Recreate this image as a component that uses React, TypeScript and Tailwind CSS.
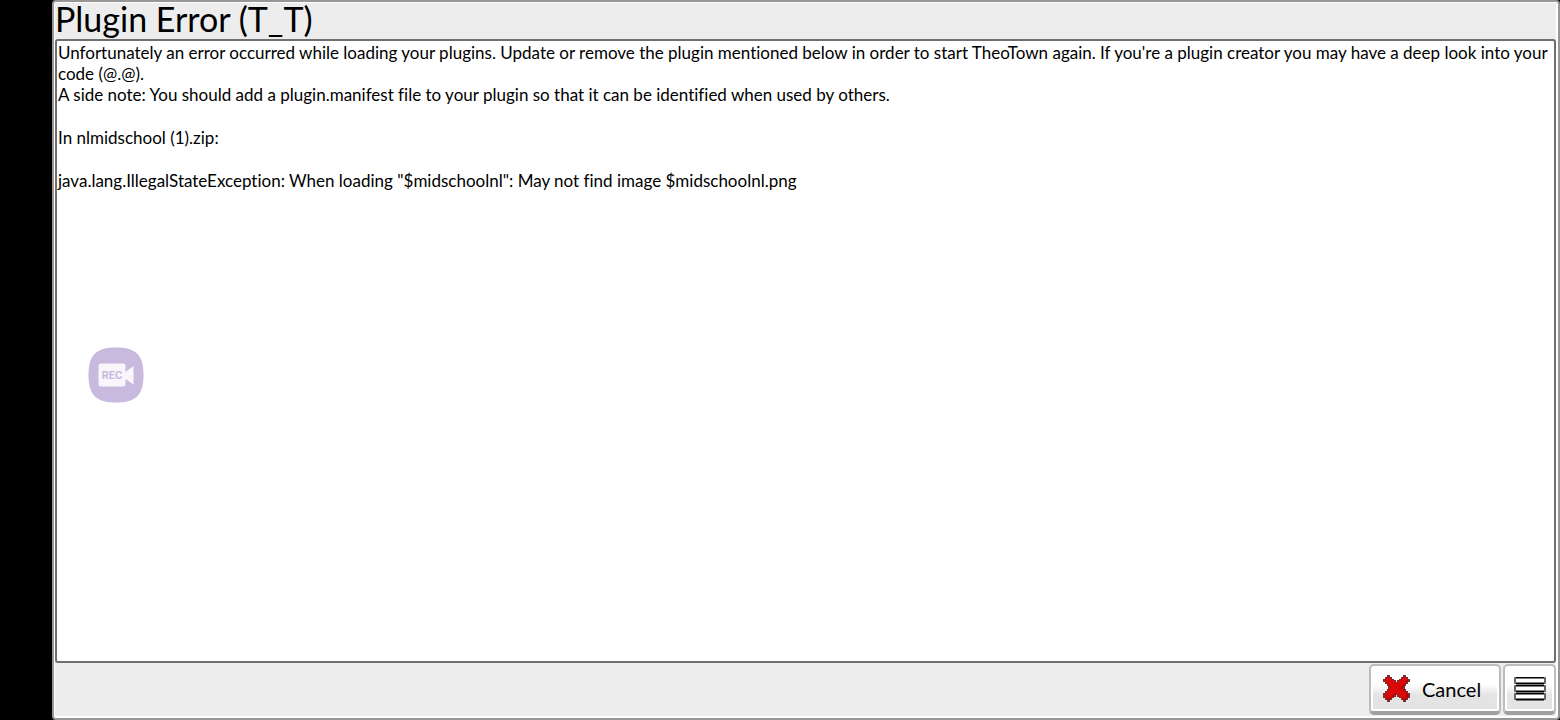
import type { ReactNode } from "react";

// Pixel map for the cross sprite: # outline, r fill, d shade
const CROSS = [
	"..##.......##..",
	".#rr#.....#rr#.",
	"#rrrr#...#rrrr#",
	"#rrrrr#.#rrrrd#",
	".#rrrrr#rrrrd#.",
	"..#rrrrrrrrd#..",
	"...#rrrrrrd#...",
	"...#rrrrrrd#...",
	"..#rrrrrrrrd#..",
	".#rrrrrrrrrrd#.",
	"#rrrrrd#rrrrrd#",
	"#rrrrd#.#rrrrd#",
	"#rrdd#...#rrdd#",
	".#dd#.....#dd#.",
	"..##.......##..",
];

const CROSS_COLORS: Record<string, string> = {
	"#": "#7a3030",
	r: "#dc0808",
	d: "#b80404",
};

export default function App() {
	return (
		<div className="flex h-screen bg-black pl-[52px] font-['Lato',sans-serif] text-black [font-variant-ligatures:none]">
			<main className="relative flex min-w-0 flex-1 flex-col rounded-[4px] border-2 border-[#979797] bg-white pt-px pr-0.5 pb-0.5 pl-px">
				<div className="flex min-h-0 flex-1 flex-col bg-[#ededed]">
					<h1 className="h-9 shrink-0 text-[34px] leading-8">
						Plugin Error (T_T)
					</h1>

					<ErrorLog />

					<footer className="flex h-[53px] shrink-0 items-start justify-end gap-0.5 pt-px">
						<GameButton className="w-[132px] gap-3 pl-2">
							<CrossIcon />
							<span className="text-xl leading-6">Cancel</span>
						</GameButton>
						<GameButton className="w-[53px] justify-center" label="Menu">
							<LinesIcon />
						</GameButton>
					</footer>
				</div>

				<RecordBubble />
			</main>
		</div>
	);
}

function ErrorLog() {
	return (
		<section className="min-h-0 flex-1 overflow-hidden rounded-[3px] border-2 border-[#6f6f6f] bg-white px-px pt-px text-[17px] leading-[21px]">
			<p className="mb-[22px]">
				Unfortunately an error occurred while loading your plugins. Update or
				remove the plugin mentioned below in order to start TheoTown again. If
				you're a plugin creator you may have a deep look into your code (@.@).
				<br />A side note: You should add a plugin.manifest file to your plugin
				so that it can be identified when used by others.
			</p>
			<p className="mb-[22px]">In nlmidschool (1).zip:</p>
			<p>
				java.lang.IllegalStateException: When loading "$midschoolnl": May not
				find image $midschoolnl.png
			</p>
		</section>
	);
}

function GameButton({
	className,
	label,
	children,
}: {
	className: string;
	label?: string;
	children: ReactNode;
}) {
	return (
		<button
			type="button"
			aria-label={label}
			className={`flex h-[51px] items-center rounded-[5px] border-2 border-b-4 border-[#bcbcbc] border-b-[#a0a0a0] bg-linear-to-b from-white from-40% to-[#e4e4e4] to-65% ring-2 ring-white ring-inset ${className}`}
		>
			{children}
		</button>
	);
}

function CrossIcon() {
	return (
		<svg
			viewBox="0 0 15 15"
			className="ml-1 size-[27px] shrink-0"
			shapeRendering="crispEdges"
			aria-hidden="true"
		>
			{CROSS.flatMap((row, y) =>
				[...row].map((c, x) =>
					c === "." ? null : (
						<rect
							key={`${x}-${y}`}
							x={x}
							y={y}
							width="1"
							height="1"
							fill={CROSS_COLORS[c]}
						/>
					),
				),
			)}
		</svg>
	);
}

function LinesIcon() {
	return (
		<svg viewBox="0 0 32 26" className="h-[26px] w-8" aria-hidden="true">
			{[0, 8, 16].map((y) => (
				<g key={y}>
					<rect x="0" y={y + 1} width="32" height="7" rx="1" fill="#666" />
					<rect x="2" y={y + 1} width="28" height="7.500" fill="#000" />
					<rect x="2" y={y + 2.5} width="28" height="4" fill="#fff" />
				</g>
			))}
		</svg>
	);
}

// Screen recorder bubble floating over the game
function RecordBubble() {
	return (
		<button
			type="button"
			aria-label="Record"
			className="absolute top-[345px] left-[34px] size-[56px]"
		>
			<svg viewBox="0 0 56 56" className="size-full">
				<path
					d="M28 0.5C48 0.5 55.5 8 55.5 28S48 55.5 28 55.5 0.5 48 0.5 28 8 0.5 28 0.5Z"
					fill="#c8b9df"
				/>
				<rect x="10.500" y="16.500" width="27" height="23" rx="2.5" fill="#f8f6fb" />
				<path d="M36 26L45.500 19V37.500L36 31Z" fill="#f8f6fb" />
				<text
					x="24"
					y="32"
					textAnchor="middle"
					fontFamily="Roboto, sans-serif"
					fontWeight="700"
					fontSize="11"
					fill="#c8b9df"
				>
					REC
				</text>
			</svg>
		</button>
	);
}
